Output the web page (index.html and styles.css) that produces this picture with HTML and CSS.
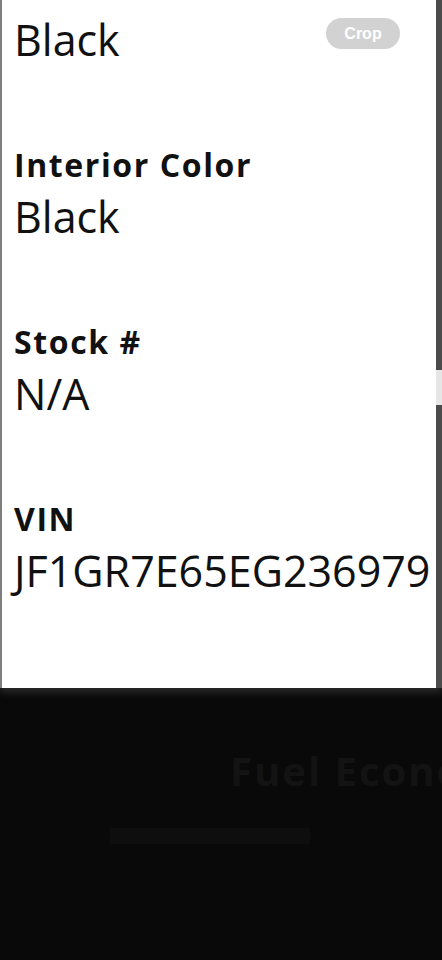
FILE: index.html
```html
<!DOCTYPE html>
<html lang="en">
  <head>
    <meta charset="UTF-8" />
    <meta name="viewport" content="width=device-width, initial-scale=1.0" />
    <title>Vehicle Details</title>
    <link rel="stylesheet" href="styles.css">
  </head>
  <body>
    <div class="sheet">
      <button class="crop-btn">Crop</button>
      <div class="rail-thumb"></div>
      <div class="spec-list">
        <div class="spec">
          <div class="spec-label">Exterior Color</div>
          <div class="spec-value">Black</div>
        </div>
        <div class="spec">
          <div class="spec-label">Interior Color</div>
          <div class="spec-value">Black</div>
        </div>
        <div class="spec">
          <div class="spec-label">Stock #</div>
          <div class="spec-value">N/A</div>
        </div>
        <div class="spec">
          <div class="spec-label">VIN</div>
          <div class="spec-value">JF1GR7E65EG236979</div>
        </div>
      </div>
    </div>

    <div class="dark">
      <h2 class="dark-title">Fuel Economy</h2>
      <div class="dark-bar"></div>
    </div>
  </body>
</html>
```

FILE: styles.css
```css
body {
  margin: 0;
  width: 442px;
  background-color: #090909;
  font-family: "Open Sans", Arial, sans-serif;
  overflow: hidden;
}
.sheet {
  display: flow-root;
  box-sizing: border-box;
  width: 442px;
  height: 688px;
  background-color: #fff;
  border-left: 2px solid #7d7d7d;
  border-right: 6px solid #4b4b4b;
  box-shadow: 0 4px 8px rgba(90, 90, 90, 0.45);
  position: relative;
  z-index: 1;
}
.rail-thumb {
  position: absolute;
  top: 370px;
  right: -6px;
  width: 6px;
  height: 35px;
  background-color: #e6e6e6;
}
.crop-btn {
  position: absolute;
  top: 18px;
  right: 36px;
  width: 74px;
  height: 31px;
  border: none;
  border-radius: 16px;
  background-color: #d2d2d2;
  color: #fff;
  font-family: "Liberation Sans", Arial, sans-serif;
  font-weight: bold;
  font-size: 16px;
  padding: 0;
  z-index: 1;
}
.spec-list {
  margin-top: -28px;
  padding-left: 12px;
}
.spec {
  margin-bottom: 83px;
}
.spec-label {
  font-size: 32px;
  line-height: 32px;
  font-weight: 700;
  letter-spacing: 1.6px;
  color: #111;
  margin-bottom: 10px;
}
.spec-value {
  font-size: 43px;
  line-height: 52px;
  color: #111;
  white-space: nowrap;
}
.dark {
  height: 272px;
  overflow: hidden;
  padding-top: 58px;
  box-sizing: border-box;
}
.dark-title {
  margin: 0;
  padding-left: 230px;
  font-size: 40px;
  line-height: 50px;
  font-weight: 700;
  letter-spacing: 2px;
  color: #131313;
  white-space: nowrap;
}
.dark-bar {
  margin: 32px 0 0 110px;
  width: 200px;
  height: 16px;
  background-color: #0e0e0e;
}
```
